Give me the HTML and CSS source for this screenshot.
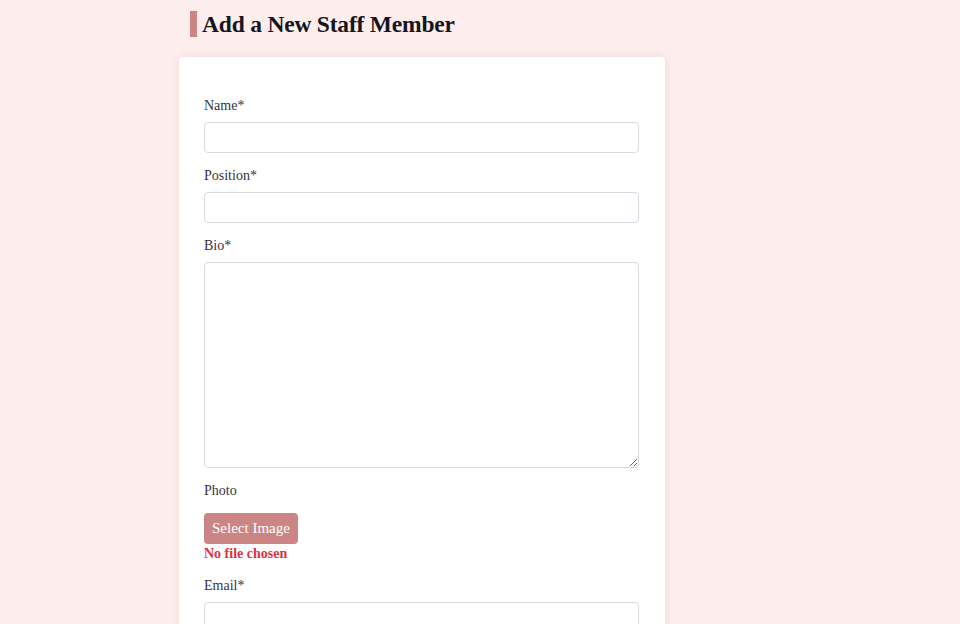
FILE: index.html
```html
<!DOCTYPE html>
<html lang="en">
<head>
<meta charset="utf-8">
<title>Add a New Staff Member</title>
<link rel="stylesheet" href="styles.css">
</head>
<body>
<main class="page">
  <h1 class="title">Add a New Staff Member</h1>
  <form class="card">
    <div class="field">
      <label class="label" for="name">Name*</label>
      <input class="input" id="name" type="text">
    </div>
    <div class="field">
      <label class="label" for="position">Position*</label>
      <input class="input" id="position" type="text">
    </div>
    <div class="field">
      <label class="label" for="bio">Bio*</label>
      <textarea class="textarea" id="bio"></textarea>
    </div>
    <div class="field">
      <span class="label">Photo</span>
      <button type="button" class="select-btn">Select Image</button>
      <div class="file-status">No file chosen</div>
    </div>
    <div class="field">
      <label class="label" for="email">Email*</label>
      <input class="input" id="email" type="email">
    </div>
  </form>
</main>
</body>
</html>
```
FILE: styles.css
```css
html, body {
  margin: 0;
  padding: 0;
  background: #fdeeed;
  font-family: "Liberation Serif", "Times New Roman", serif;
  color: #2e2f3a;
}

.page {
  width: 486px;
  margin-left: 179px;
  padding-top: 11px;
}

.title {
  margin: 0 0 20px 11px;
  padding-left: 5px;
  border-left: 7px solid #cc8585;
  font-size: 23.5px;
  line-height: 26px;
  font-weight: bold;
  color: #15151f;
  letter-spacing: -0.2px;
}

.card {
  background: #ffffff;
  border-radius: 4px;
  box-shadow: 0 0 8px rgba(200, 150, 150, 0.25);
  padding: 38px 26px 40px 25px;
  height: 600px;
  box-sizing: border-box;
}

.field {
  display: flex;
  flex-direction: column;
  align-items: flex-start;
  margin-bottom: 12px;
}

.label {
  display: block;
  font-size: 14px;
  line-height: 22px;
  color: #33343f;
  margin-bottom: 5px;
}

.input,
.textarea {
  box-sizing: border-box;
  width: 100%;
  border: 1px solid #d8dbe2;
  border-radius: 4px;
  background: #fff;
  font-family: inherit;
  font-size: 14px;
  margin: 0;
}

.input {
  height: 31px;
}

.textarea {
  height: 206px;
  resize: vertical;
}

.select-btn {
  margin-top: 6px;
  height: 31px;
  padding: 0 8px;
  border: none;
  border-radius: 4px;
  background: #cc8585;
  color: #ffffff;
  font-family: inherit;
  font-size: 15px;
  cursor: pointer;
}

.file-status {
  margin-top: 1px;
  font-size: 14px;
  line-height: 18px;
  font-weight: bold;
  color: #dc3342;
}
```
